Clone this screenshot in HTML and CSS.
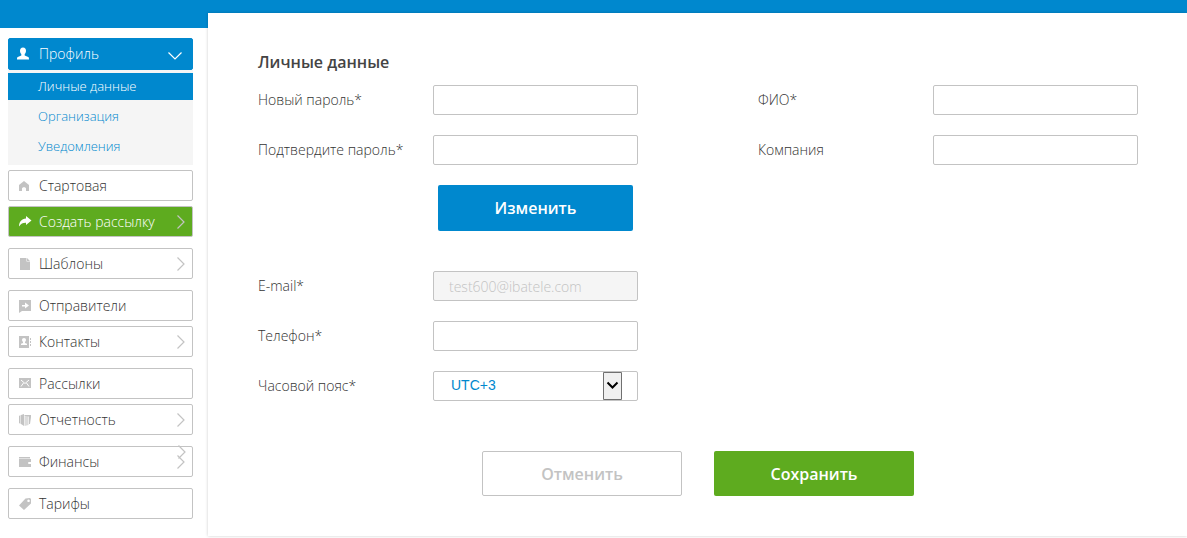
FILE: index.html
```html
<!DOCTYPE html>
<html lang="ru">

<head>
    <meta charset="UTF-8">
    <meta name="viewport" content="width=device-width, initial-scale=1.0">
    <title>Личные данные</title>
    <link rel="stylesheet" href="styles.css">
</head>

<body>
    <header class="header"></header>
    <div class="page">
        <nav class="sidebar">
            <a href="#" class="menu-item active">
                <svg class="icon" viewBox="0 0 14 14"><path fill="currentColor" d="M6 0.5c2 0 3 1.300 3 3.200 0 1.500-.6 2.600-1.300 3.300v1.500l3.500 1.400c.6.300.8.800.8 2.600H0c0-1.800.2-2.300.8-2.600l3.500-1.400V7C3.600 6.300 3 5.200 3 3.700 3 1.800 4 .5 6 .5z"/></svg>
                <span>Профиль</span>
                <svg class="arrow-down" viewBox="0 0 14 8"><path d="M.5.5L7 7 13.500.5" fill="none" stroke="currentColor" stroke-width="1.200"/></svg>
            </a>
            <div class="submenu">
                <a href="#" class="selected">Личные данные</a>
                <a href="#">Организация</a>
                <a href="#">Уведомления</a>
            </div>
            <a href="#" class="menu-item">
                <svg class="icon" viewBox="0 0 14 14"><path fill="currentColor" d="M6 2l5 4v6H8V9.800C8 8.800 7.200 8.300 6 8.300S4 8.800 4 9.800V12H1V6z"/></svg>
                <span>Стартовая</span>
            </a>
            <a href="#" class="menu-item parent create">
                <svg class="icon" viewBox="0 0 14 14"><path fill="currentColor" d="M8 1l5.500 4.500L8 10V7.700C5 7.600 3 8.500 1 11.500 1 7 3.500 3.600 8 3.400z"/></svg>
                <span>Создать рассылку</span>
                <svg class="arrow" viewBox="0 0 8 14"><path d="M.5.5L7 7 .5 13.500" fill="none" stroke="currentColor" stroke-width="1.200"/></svg>
            </a>
            <a href="#" class="menu-item parent">
                <svg class="icon" viewBox="0 0 14 14"><path fill="currentColor" d="M2 1h6.500v3.500H12V13H2zM9 1l3 3H9z"/></svg>
                <span>Шаблоны</span>
                <svg class="arrow" viewBox="0 0 8 14"><path d="M.5.5L7 7 .5 13.500" fill="none" stroke="currentColor" stroke-width="1.200"/></svg>
            </a>
            <a href="#" class="menu-item">
                <svg class="icon" viewBox="0 0 14 14"><path fill="currentColor" d="M1 1h12v11H4l-3 2z"/><path fill="#fff" d="M4 6h3V3.500l4 3-4 3V7.500H4z"/></svg>
                <span>Отправители</span>
            </a>
            <a href="#" class="menu-item parent">
                <svg class="icon" viewBox="0 0 14 14"><path fill="currentColor" d="M1 1h10v12H1zM12 3h1v2h-1zM12 6h1v2h-1zM12 9h1v2h-1z"/><path fill="#fff" d="M6 3c1.200 0 2 .8 2 2 0 .8-.4 1.500-1 2v1l2 .8V10H3V8.800L5 8V7c-.6-.5-1-1.200-1-2 0-1.200.8-2 2-2z"/></svg>
                <span>Контакты</span>
                <svg class="arrow" viewBox="0 0 8 14"><path d="M.5.5L7 7 .5 13.500" fill="none" stroke="currentColor" stroke-width="1.200"/></svg>
            </a>
            <a href="#" class="menu-item">
                <svg class="icon" viewBox="0 0 14 14"><path fill="currentColor" d="M1 1h12v10H1z"/><path fill="none" stroke="#fff" d="M3 3l4 3.500L11 3M3 9.500L5.500 6M11 9.500L8.500 6"/></svg>
                <span>Рассылки</span>
            </a>
            <a href="#" class="menu-item parent">
                <svg class="icon" viewBox="0 0 14 14"><path fill="currentColor" d="M1 3l1.500-1v9L1 10zM3 2l3-1v12l-3-2z"/><path fill="currentColor" opacity=".6" d="M6.500 4l4-1v9l-4 1z"/><path fill="currentColor" d="M6.500 2H13v2l-1 7h-1V3.500H6.500z"/></svg>
                <span>Отчетность</span>
                <svg class="arrow" viewBox="0 0 8 14"><path d="M.5.5L7 7 .5 13.500" fill="none" stroke="currentColor" stroke-width="1.200"/></svg>
            </a>
            <a href="#" class="menu-item parent">
                <svg class="icon" viewBox="0 0 14 14"><path fill="currentColor" d="M1 2h11v1.500H1zM1 4h12v3h-2a1 1 0 0 0 0 2h2v3H1z"/></svg>
                <span>Финансы</span>
                <svg class="arrow" viewBox="0 0 8 14"><path d="M.5.5L7 7 .5 13.500" fill="none" stroke="currentColor" stroke-width="1.200"/></svg>
                <svg class="arrow arrow-over" viewBox="0 0 8 14"><path d="M.5.5L7 7 .5 13.500" fill="none" stroke="currentColor" stroke-width="1.200"/></svg>
            </a>
            <a href="#" class="menu-item">
                <svg class="icon" viewBox="0 0 14 14"><path fill="currentColor" fill-rule="evenodd" d="M7.500 1.500L12 1l1 1v4.500L6 13 1 8.500zM10.500 2.500a1.300 1.300 0 1 0 .1 0z"/></svg>
                <span>Тарифы</span>
            </a>
        </nav>

        <main class="content">
            <h2>Личные данные</h2>
            <form>
                <div class="columns">
                    <div class="column">
                        <div class="field">
                            <label for="password">Новый пароль*</label>
                            <input type="password" id="password">
                        </div>
                        <div class="field">
                            <label for="confirm">Подтвердите пароль*</label>
                            <input type="password" id="confirm">
                        </div>
                        <button type="button" class="btn btn-change">Изменить</button>
                        <div class="field">
                            <label for="email">E-mail*</label>
                            <input type="text" id="email" value="test600@ibatele.com" disabled>
                        </div>
                        <div class="field">
                            <label for="phone">Телефон*</label>
                            <input type="text" id="phone">
                        </div>
                        <div class="field">
                            <label for="timezone">Часовой пояс*</label>
                            <div class="select-box">
                                <select id="timezone">
                                    <option>UTC+3</option>
                                </select>
                                <svg class="select-arrow" viewBox="0 0 19 28"><path fill="#f0f0f0" stroke="#707070" d="M.5.5h18v27H.5z"/><path d="M4.500 10.500l5 5 5-5" fill="none" stroke="#000" stroke-width="2"/></svg>
                            </div>
                        </div>
                    </div>
                    <div class="column">
                        <div class="field">
                            <label for="fio">ФИО*</label>
                            <input type="text" id="fio">
                        </div>
                        <div class="field">
                            <label for="company">Компания</label>
                            <input type="text" id="company">
                        </div>
                    </div>
                </div>
                <div class="buttons">
                    <button type="reset" class="btn btn-cancel">Отменить</button>
                    <button type="submit" class="btn btn-save">Сохранить</button>
                </div>
            </form>
        </main>
    </div>
</body>

</html>
```
FILE: styles.css
```css
* {
    margin: 0;
    padding: 0;
    box-sizing: border-box;
}

body {
    min-height: 100vh;
    font-family: "Open Sans", sans-serif;
    font-size: 14px;
    font-weight: 300;
    line-height: 20px;
    color: #333;
    background: #fff;
}

.header {
    height: 28px;
    background: #0088ce;
}

.page {
    display: flex;
    align-items: flex-start;
}

/* left menu */
.sidebar {
    width: 208px;
    flex-shrink: 0;
    padding: 10px 15px 0 8px;
}

.menu-item {
    position: relative;
    display: flex;
    align-items: center;
    height: 31px;
    margin-bottom: 5px;
    padding: 0 7px 0 9px;
    border: 1px solid #c3c3c3;
    border-radius: 2px;
    color: #333;
    text-decoration: none;
}

.menu-item span {
    flex: 1;
}

.menu-item.parent {
    margin-bottom: 11px;
}

.menu-item.active {
    height: 32px;
    margin-bottom: 0;
    padding-left: 8px;
    background: #0088ce;
    border-color: #0088ce;
    color: #fff;
}

.menu-item.create {
    background: #5eab1f;
    color: #fff;
}

.icon {
    width: 14px;
    height: 14px;
    margin-right: 7px;
    color: #c3c3c3;
}

.active .icon,
.create .icon {
    color: #fff;
}

.active .icon {
    margin-right: 8px;
}

.arrow {
    width: 8px;
    height: 14px;
    color: #c3c3c3;
}

.arrow-over {
    position: absolute;
    top: -2px;
    right: 6px;
}

.arrow-down {
    width: 14px;
    height: 8px;
    margin: 3px 3px 0 0;
}

.submenu {
    margin-bottom: 5px;
    padding: 3px 0 2px;
    background: #f5f5f5;
}

.submenu a {
    display: block;
    margin-bottom: 3px;
    padding-left: 30px;
    font-size: 13px;
    line-height: 27px;
    color: #0088ce;
    text-decoration: none;
}

.submenu .selected {
    background: #0088ce;
    color: #fff;
}

/* form */
.content {
    flex: 1;
    margin-top: -15px;
    padding: 39px 49px 40px 50px;
    background: #fff;
    box-shadow: 0 0 3px rgba(0, 0, 0, 0.2);
}

h2 {
    margin-bottom: 13px;
    font-size: 16px;
    font-weight: 600;
    line-height: 20px;
    color: #444;
}

.columns {
    display: grid;
    grid-template-columns: 1fr 1fr;
    gap: 120px;
}

.field {
    display: grid;
    grid-template-columns: 175px 1fr;
    align-items: center;
    height: 30px;
    margin-bottom: 20px;
}

.field input,
.select-box {
    width: 100%;
    height: 30px;
    border: 1px solid #c3c3c3;
    border-radius: 2px;
    background: #fff;
}

.field input {
    padding: 0 15px;
    font: inherit;
    color: #333;
}

.field input:disabled {
    background: #f5f5f5;
    color: #c3c3c3;
}

.select-box {
    position: relative;
    padding-right: 15px;
}

.select-box select {
    display: block;
    width: 100%;
    height: 26px;
    padding-left: 17px;
    border: none;
    appearance: none;
    background: transparent;
    font-family: "Liberation Sans", Arial, sans-serif;
    font-size: 14px;
    color: #0088ce;
}

.select-arrow {
    position: absolute;
    top: 0;
    right: 15px;
    width: 19px;
    height: 28px;
    pointer-events: none;
}

.btn {
    width: 200px;
    height: 45px;
    border: none;
    border-radius: 2px;
    font-family: inherit;
    font-size: 16px;
    font-weight: 600;
    color: #fff;
    cursor: pointer;
}

.btn-change {
    display: block;
    width: 195px;
    height: 46px;
    margin: 0 5px 40px auto;
    background: #0088ce;
}

.buttons {
    display: flex;
    justify-content: center;
    gap: 32px;
    margin-top: 30px;
}

.btn-cancel {
    border: 1px solid #c3c3c3;
    background: #fff;
    color: #c3c3c3;
}

.btn-save {
    background: #5eab1f;
}
```
